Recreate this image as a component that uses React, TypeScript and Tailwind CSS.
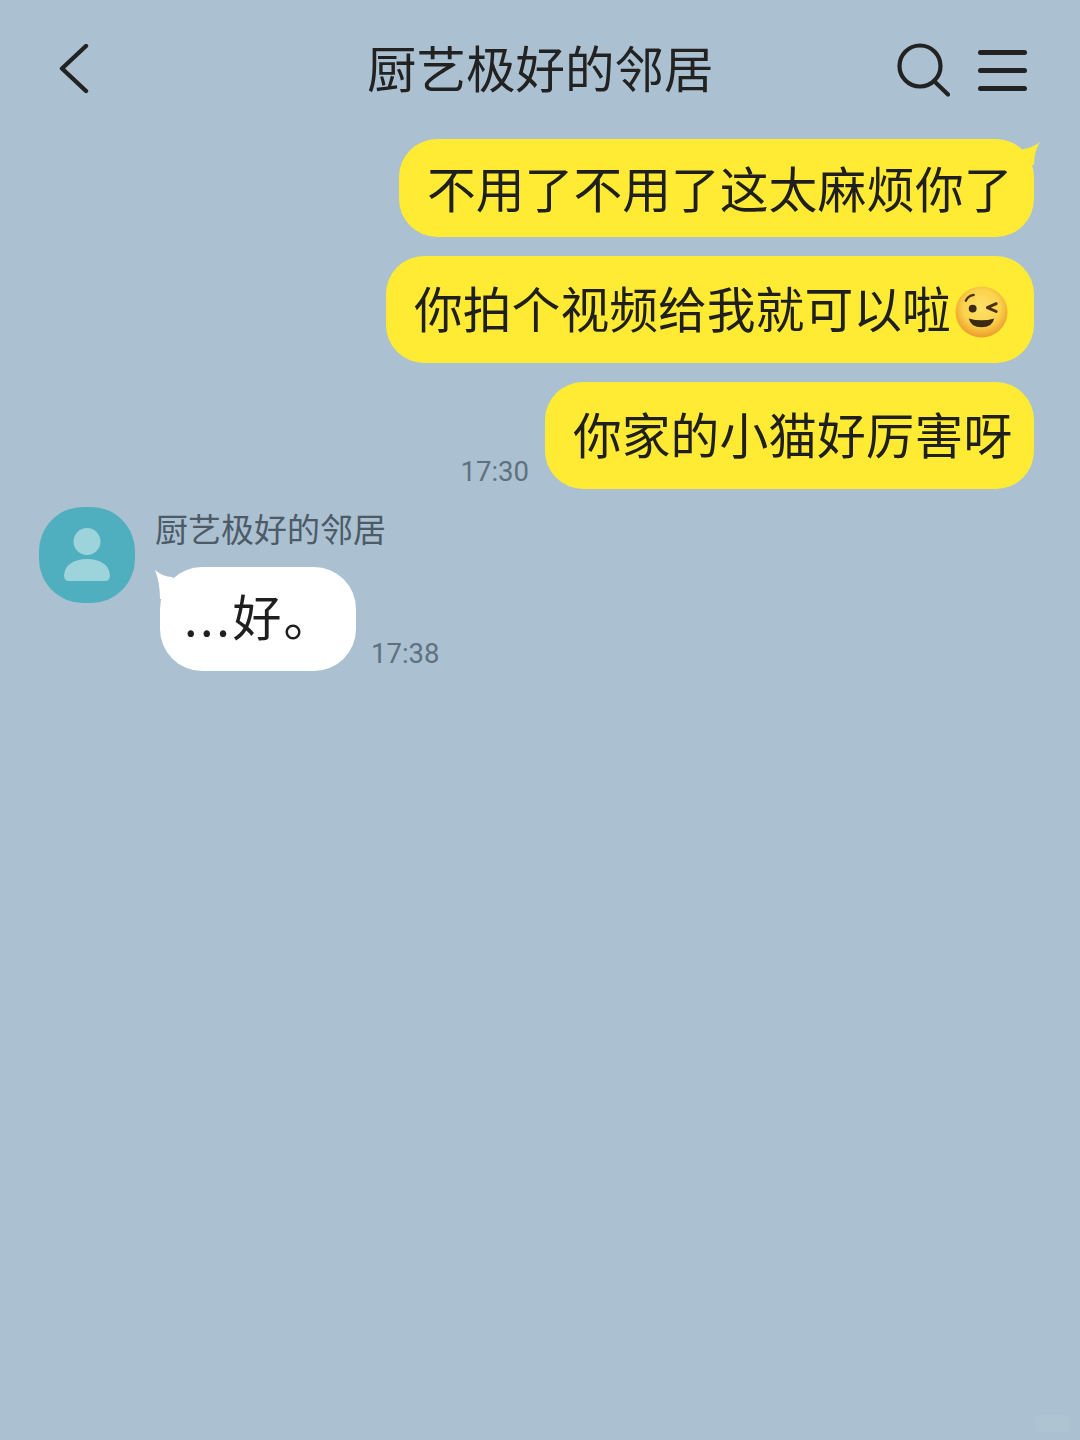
import React from "react";

const font = "font-['Noto_Sans_CJK_SC','Noto_Sans',sans-serif]";

function Wink() {
  return (
    <svg width="53" height="52" viewBox="0 0 54 53" className="shrink-0">
      <defs>
        <radialGradient id="wf" cx="50%" cy="42%" r="55%">
          <stop offset="0%" stopColor="#fde26a" />
          <stop offset="65%" stopColor="#fbd24c" />
          <stop offset="100%" stopColor="#eea22d" />
        </radialGradient>
      </defs>
      <ellipse cx="27" cy="26.5" rx="26.5" ry="26" fill="url(#wf)" />
      <path d="M11 15 Q13 10 19 9" fill="none" stroke="#4a3015" strokeWidth="2.4" strokeLinecap="round" />
      <ellipse cx="18" cy="23" rx="4" ry="4" fill="#3d2a14" />
      <path d="M42 18 L33 22 L42 26" fill="none" stroke="#4a3015" strokeWidth="3" strokeLinecap="round" strokeLinejoin="round" />
      <path d="M14 33 Q27 37 40 33 Q38 42 27 42 Q16 42 14 33Z" fill="#3d2a14" />
    </svg>
  );
}

function YellowBubble({ children, tail, className }: { children: React.ReactNode; tail?: boolean; className: string }) {
  return (
    <div className={`relative flex items-center rounded-[38px] bg-[#ffeb33] text-[48.8px] leading-none text-[#1f1f1f] ${className}`}>
      {children}
      {tail && (
        <svg width="24" height="26" viewBox="0 0 24 26" className="absolute right-[-6px] top-[2px]">
          <path d="M7 8 Q16 7 24 1 Q18 10 18 24 L2 24 Z" fill="#ffeb33" />
        </svg>
      )}
    </div>
  );
}

export default function App() {
  return (
    <div className={`${font} relative flex h-[1440px] w-[1080px] flex-col overflow-hidden bg-[#abc1d1]`}>
      <header className="relative flex h-[139px] shrink-0 items-center justify-between pl-[58px] pr-[53px] pt-[1px]">
        <svg width="32" height="52" viewBox="0 0 32 52" className="shrink-0">
          <path d="M28 2 L4 24.5 L28 47" fill="none" stroke="#222" strokeWidth="4.4" strokeLinecap="round" strokeLinejoin="round" />
        </svg>
        <div className="absolute left-[367px] top-[36px] text-[49.5px] leading-[62px] whitespace-nowrap text-[#222]">厨艺极好的邻居</div>
        <div className="flex items-center gap-[28px]">
          <svg width="54" height="54" viewBox="0 0 54 54">
            <circle cx="24" cy="23" r="20.5" fill="none" stroke="#222" strokeWidth="4.2" />
            <path d="M38 38 L52 51.5" fill="none" stroke="#222" strokeWidth="4.2" strokeLinecap="round" />
          </svg>
          <div className="flex w-[49px] flex-col gap-[13px]">
            <div className="h-[5px] rounded-full bg-[#222]" />
            <div className="h-[5px] rounded-full bg-[#222]" />
            <div className="h-[5px] rounded-full bg-[#222]" />
          </div>
        </div>
      </header>

      <main className="flex flex-col">
        <div className="flex flex-col items-end gap-[19px] pr-[46px]">
          <YellowBubble tail className="h-[98px] w-[635px] pb-[1px] pl-[28px]">
            不用了不用了这太麻烦你了
          </YellowBubble>
          <YellowBubble className="h-[107px] w-[648px] pb-[4px] pl-[28px]">
            你拍个视频给我就可以啦
            <span className="ml-[4px] mt-[9px] flex"><Wink /></span>
          </YellowBubble>
          <div className="relative flex items-end gap-[16px]">
            <span className="font-['Roboto',sans-serif] text-[27.5px] leading-[35px] text-[#5f7180]">17:30</span>
            <YellowBubble className="h-[107px] w-[489px] pb-[4px] pl-[28px]">
              你家的小猫好厉害呀
            </YellowBubble>
          </div>
        </div>

        <div className="mt-[18px] flex pl-[39px]">
          <div className="flex h-[96px] w-[96px] shrink-0 items-center justify-center rounded-[44px] bg-[#4fafbe]">
            <svg width="48" height="54" viewBox="0 0 48 54">
              <circle cx="24" cy="13.5" r="13.5" fill="#9dd3da" />
              <path d="M1 47 C2 36 12 31 24 31 C36 31 46 36 47 47 Q47 53 42 53 L6 53 Q1 53 1 47Z" fill="#9dd3da" />
            </svg>
          </div>
          <div className="ml-[20px] flex flex-col">
            <div className="text-[33px] leading-[42px] whitespace-nowrap text-[#4c5b67]">厨艺极好的邻居</div>
            <div className="mt-[18px] flex items-end">
              <div className="relative ml-[5px] flex h-[104px] w-[196px] items-center rounded-[42px] bg-white pb-[10px] pl-[24px] text-[49px] leading-none text-[#1f1f1f]">
                <span className="whitespace-nowrap">
                  <span className="tracking-[2.5px]">...</span>好<span className="ml-[2px]">。</span>
                </span>
                <svg width="26" height="30" viewBox="0 0 26 30" className="absolute left-[-5px] top-[2px]">
                  <path d="M0 1 Q8 8 17 8 L25 14 L25 30 L5 30 Q5 14 0 1Z" fill="#ffffff" />
                </svg>
              </div>
              <span className="ml-[15px] font-['Roboto',sans-serif] text-[27.5px] leading-[35px] text-[#5f7180]">17:38</span>
            </div>
          </div>
        </div>
      </main>

      <div className="absolute bottom-[8px] right-[10px] h-[17px] w-[35px] rounded-[5px] bg-white/5" />
    </div>
  );
}
